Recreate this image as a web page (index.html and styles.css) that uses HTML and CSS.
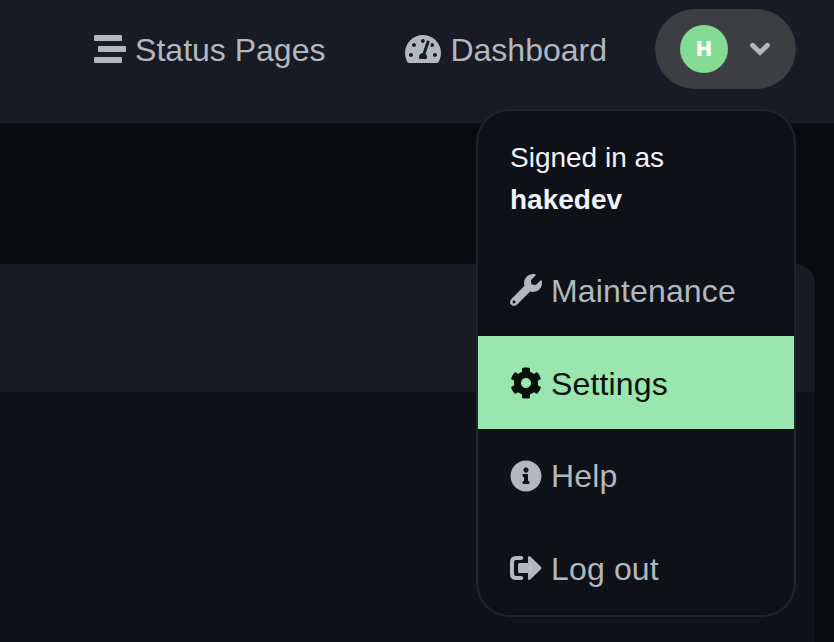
FILE: index.html
```html
<!DOCTYPE html>
<html lang="en">
<head>
<meta charset="utf-8">
<title>Dashboard</title>
<link rel="stylesheet" href="styles.css">
</head>
<body>
<header class="nav">
  <a class="nav-link status"><svg width="32" height="32" viewBox="0 0 32 32"><rect y="2" width="28" height="6" rx="1"/><rect x="4" y="13" width="28" height="6" rx="1"/><rect y="24" width="28" height="6" rx="1"/></svg><span>Status Pages</span></a>
  <a class="nav-link dash"><svg width="36" height="32" viewBox="0 0 576 512"><path d="M288 32C128.94 32 0 160.94 0 320c0 52.8 14.25 102.26 39.06 144.8 5.61 9.62 16.3 15.2 27.44 15.2h443c11.14 0 21.83-5.58 27.44-15.2C561.75 422.26 576 372.8 576 320c0-159.06-128.94-288-288-288zm0 64c14.71 0 26.58 10.13 30.32 23.65-1.11 2.26-2.64 4.23-3.45 6.67l-9.22 27.67c-5.13 3.49-10.97 6.01-17.64 6.01-17.67 0-32-14.33-32-32S270.33 96 288 96zM96 384c-17.67 0-32-14.33-32-32s14.33-32 32-32 32 14.33 32 32-14.33 32-32 32zm48-160c-17.67 0-32-14.33-32-32s14.33-32 32-32 32 14.33 32 32-14.33 32-32 32zm246.77-72.41l-61.33 184C343.13 347.33 352 364.54 352 384c0 11.72-3.38 22.55-8.88 32H232.88c-5.5-9.45-8.88-20.28-8.88-32 0-33.94 26.5-61.43 59.9-63.59l61.34-184.01c4.17-12.56 17.73-19.45 30.36-15.17 12.57 4.19 19.35 17.79 15.17 30.36zm14.66 57.2l15.52-46.55c3.47-1.29 7.13-2.23 11.05-2.23 17.67 0 32 14.33 32 32s-14.33 32-32 32c-11.38-.01-20.89-6.28-26.57-15.22zM480 384c-17.67 0-32-14.33-32-32s14.33-32 32-32 32 14.33 32 32-14.33 32-32 32z"/></svg><span>Dashboard</span></a>
  <div class="profile">
    <div class="avatar">H</div>
    <svg width="24" height="20" viewBox="0 0 24 20"><path class="chevron" d="M4.5 6.3 12 13.5 19.5 6.3"/></svg>
    <div class="menu">
      <div class="signed"><span>Signed in as</span><strong>hakedev</strong></div>
      <a class="item"><svg width="32" height="32" viewBox="0 0 512 512"><path d="M507.73 109.1c-2.24-9.03-13.54-12.09-20.12-5.51l-74.36 74.36-67.88-11.31-11.31-67.88 74.36-74.36c6.62-6.62 3.43-17.9-5.66-20.16-47.38-11.74-99.55.91-136.58 37.93-39.64 39.64-50.55 97.1-34.05 147.2L18.74 402.76c-24.99 24.99-24.99 65.51 0 90.5 24.99 24.99 65.51 24.99 90.5 0l213.21-213.21c50.12 16.71 107.47 5.68 147.37-34.22 37.07-37.07 49.7-89.32 37.91-136.73zM64 472c-13.25 0-24-10.75-24-24 0-13.26 10.75-24 24-24s24 10.74 24 24c0 13.25-10.75 24-24 24z"/></svg><span>Maintenance</span></a>
      <a class="item active"><svg width="32" height="32" viewBox="0 0 512 512"><path d="M487.4 315.7l-42.6-24.6c4.3-23.2 4.3-47 0-70.2l42.6-24.6c4.9-2.8 7.1-8.6 5.5-14-11.1-35.6-30-67.8-54.7-94.6-3.8-4.1-10-5.1-14.8-2.3L380.8 110c-17.9-15.4-38.5-27.3-60.8-35.1V25.8c0-5.6-3.9-10.5-9.4-11.7-36.7-8.2-74.3-7.8-109.2 0-5.5 1.2-9.4 6.1-9.4 11.7V75c-22.2 7.9-42.8 19.8-60.8 35.1L88.7 85.5c-4.9-2.8-11-1.9-14.8 2.3-24.7 26.7-43.6 58.9-54.7 94.6-1.7 5.4.6 11.2 5.5 14L67.3 221c-4.3 23.2-4.3 47 0 70.2l-42.6 24.6c-4.9 2.8-7.1 8.6-5.5 14 11.1 35.6 30 67.8 54.7 94.6 3.8 4.1 10 5.1 14.8 2.3l42.6-24.6c17.9 15.4 38.5 27.3 60.8 35.1v49.2c0 5.6 3.9 10.5 9.4 11.7 36.7 8.2 74.3 7.8 109.2 0 5.5-1.2 9.4-6.1 9.4-11.7v-49.2c22.2-7.9 42.8-19.8 60.8-35.1l42.6 24.6c4.9 2.8 11 1.9 14.8-2.3 24.7-26.7 43.6-58.9 54.7-94.6 1.5-5.5-.7-11.3-5.6-14.1zM256 336c-44.1 0-80-35.9-80-80s35.9-80 80-80 80 35.9 80 80-35.9 80-80 80z"/></svg><span>Settings</span></a>
      <a class="item help"><svg width="32" height="32" viewBox="0 0 512 512"><path d="M256 8C119.043 8 8 119.083 8 256c0 136.997 111.043 248 248 248s248-111.003 248-248C504 119.083 392.957 8 256 8zm0 110c23.196 0 42 18.804 42 42s-18.804 42-42 42-42-18.804-42-42 18.804-42 42-42zm56 254c0 6.627-5.373 12-12 12h-88c-6.627 0-12-5.373-12-12v-24c0-6.627 5.373-12 12-12h12v-64h-12c-6.627 0-12-5.373-12-12v-24c0-6.627 5.373-12 12-12h64c6.627 0 12 5.373 12 12v100h12c6.627 0 12 5.373 12 12v24z"/></svg><span>Help</span></a>
      <a class="item"><svg width="32" height="32" viewBox="0 0 32 32"><path class="bracket" d="M11.2 6H6Q2 6 2 10V22Q2 26 6 26H11.2"/><path d="M9.5 11H18V5.6Q18 4.1 19.2 4.1 19.8 4.1 20.3 4.6L31.1 15.1Q32 16 31.1 16.9L20.3 27.4Q19.8 27.9 19.2 27.9 18 27.9 18 26.4V21H9.5Q8 21 8 19.5V12.5Q8 11 9.5 11Z"/></svg><span>Log out</span></a>
    </div>
  </div>
</header>
<main class="card"><div class="card-head"></div></main>
</body>
</html>
```
FILE: styles.css
```css
* { box-sizing: border-box; }
body {
  margin: 0;
  height: 642px;
  overflow: hidden;
  background: #0a0b0f;
  color: #b1b8c0;
  font-family: "Liberation Sans", Arial, sans-serif;
  font-size: 32px;
  line-height: 48px;
}
svg { fill: currentColor; flex: none; display: block; }
.nav {
  display: flex;
  align-items: flex-start;
  justify-content: flex-end;
  height: 123px;
  padding: 9px 38px 0 0;
  background: #181b23;
}
.nav-link, .item { display: flex; align-items: center; white-space: nowrap; }
.nav-link { height: 80px; gap: 9px; }
.status { margin-right: 80px; }
.dash { margin-right: 48px; }
.nav-link span { position: relative; top: 1px; }
.profile {
  position: relative;
  display: flex;
  align-items: center;
  width: 141px;
  height: 80px;
  padding-left: 25px;
  gap: 20px;
  border-radius: 40px;
  background: #3c3e42;
}
.avatar {
  width: 48px;
  height: 48px;
  border-radius: 50%;
  background: #84dc94;
  color: #fff;
  font: bold 20px/49px Inter, sans-serif;
  font-weight: 900;
  text-align: center;
}
.chevron, .bracket { fill: none; stroke: currentColor; stroke-width: 4; stroke-linecap: round; stroke-linejoin: round; }
.chevron { stroke-width: 4.8; stroke-linejoin: miter; }
.menu {
  position: absolute;
  top: 100px;
  right: 0;
  width: 320px;
  height: 508px;
  border: 2px solid #1d2531;
  border-radius: 34px;
  background: #0e1116;
  overflow: hidden;
}
.signed {
  display: flex;
  flex-direction: column;
  height: 132px;
  padding: 26px 32px 0;
  border-bottom: 1px solid #0c0e13;
  color: #f0f4fa;
  font-size: 28px;
  line-height: 42px;
}
.item { height: 93px; padding-left: 32px; gap: 9px; letter-spacing: 0.15px; }
.item svg { margin-top: 1px; }
.item span { position: relative; top: 1.4px; }
.help { height: 92px; }
.active { background: #99e7ae; color: #06110a; }
.card {
  width: 815px;
  height: 400px;
  margin-top: 141px;
  border-radius: 0 20px 0 0;
  background: #0f1217;
  overflow: hidden;
}
.card-head { height: 128px; background: #181b23; }
```
